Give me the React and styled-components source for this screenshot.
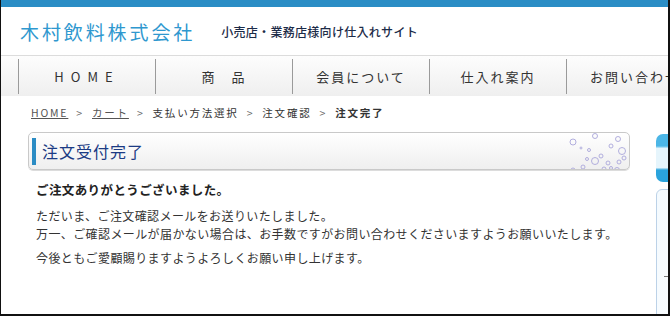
import React from 'react'
import styled, { createGlobalStyle } from 'styled-components'

const GlobalStyle = createGlobalStyle`
  body {
    margin: 0;
    background: #fff;
    font-family: "Noto Sans CJK JP", "Noto Sans", sans-serif;
  }
`

const Frame = styled.div`
  width: 670px;
  height: 316px;
  box-sizing: border-box;
  border-left: 1px solid #111;
  border-right: 2px solid #111;
  border-bottom: 2px solid #111;
  overflow: hidden;
`
const Page = styled.div`width: 1000px;`
const TopBar = styled.div`
  height: 7px;
  background: #2a8dc5;
`
const Header = styled.div`
  display: flex;
  align-items: center;
  height: 48px;
  padding-left: 19px;
`
const Logo = styled.div`
  font-size: 19px;
  letter-spacing: 2.9px;
  color: #2f98cf;
`
const Tagline = styled.div`
  margin-left: 26px;
  font-size: 12px;
  font-weight: 500;
  letter-spacing: 0.3px;
  color: #1c2b48;
`
const Nav = styled.nav`
  display: flex;
  height: 40px;
  padding-left: 17px;
  border-top: 1px solid #dcdcdc;
  background: linear-gradient(#fdfdfd, #efefef);
`
const NavItem = styled.div`
  flex: 0 0 137px;
  box-sizing: border-box;
  display: flex;
  align-items: center;
  justify-content: center;
  margin: 3px 0 2px;
  border-left: 1px solid #9a9a9a;
  font-size: 13px;
  color: #333;
  letter-spacing: ${p => p.spacing || 2}px;
  white-space: nowrap;
`
const Crumbs = styled.div`
  display: flex;
  align-items: center;
  gap: 8px;
  height: 32px;
  padding: 0 0 4px 30px;
  font-size: 10.5px;
  letter-spacing: 1.8px;
  color: #333;
`
const CrumbLink = styled.span`
  color: #555;
  text-decoration: underline;
`
const Sep = styled.span`color: #666;`
const Current = styled.span`font-weight: 700;`
const Columns = styled.div`
  display: flex;
  align-items: flex-start;
`
const Main = styled.div`
  width: 602px;
  margin-left: 27px;
`
const HeadingBox = styled.div`
  position: relative;
  display: flex;
  align-items: center;
  height: 36px;
  border: 1px solid #c9c9c9;
  border-radius: 5px;
  background: linear-gradient(#ffffff, #efefef);
  box-shadow: 0 1px 0 #dcdcdc;
  overflow: hidden;
`
const Accent = styled.div`
  width: 4px;
  height: 27px;
  margin-left: 3px;
  background: #2b8cc4;
`
const Title = styled.h1`
  margin: 0 0 0 6px;
  font-size: 16px;
  font-weight: 400;
  letter-spacing: 1px;
  color: #1c3b84;
`
const Bubbles = styled.svg`
  position: absolute;
  right: 0;
  top: 0;
`
const Body = styled.div`
  padding: 10px 0 0 8px;
  color: #333;
  font-size: 12px;
  letter-spacing: 0.4px;
`
const Thanks = styled.p`
  margin: 0 0 8px;
  font-size: 12.5px;
  font-weight: 700;
  color: #222;
`
const Para = styled.p`
  margin: 0 0 6px;
  line-height: 18px;
`
const Side = styled.div`
  margin-left: 26px;
  padding-top: 2px;
  width: 200px;
`
const BlueTab = styled.div`
  height: 48px;
  border-radius: 7px;
  background: linear-gradient(#4cb6e6 0%, #4cb6e6 25%, #e6f5fc 30%, #e6f5fc 70%, #2aa3dc 75%, #2aa3dc 100%);
`
const SideBox = styled.div`
  position: relative;
  height: 140px;
  margin-top: 7px;
  border: 1px solid #bcd2e8;
  border-radius: 6px;
  background: linear-gradient(100deg, #f4fafe, #fff 40%);
`
const Dash = styled.div`
  position: absolute;
  left: 7px;
  top: 86px;
  width: 8px;
  height: 1px;
  background: #777;
`

const bubbles = [
  [8, 9, 3], [30, 3, 2.5], [46, 13, 2], [53, 6, 2.5], [57, 18, 3.5], [24, 17, 1.5],
  [36, 23, 2], [30, 28, 3.5], [43, 30, 2], [54, 29, 2], [18, 34, 2], [22, 26, 1.5],
  [39, 36, 2], [46, 35, 1.5], [52, 37, 2.5], [8, 37, 2], [59, 25, 2], [16, 15, 1]
]

const App = () => (
  <Frame>
    <GlobalStyle />
    <Page>
      <TopBar />
      <Header>
        <Logo>木村飲料株式会社</Logo>
        <Tagline>小売店・業務店様向け仕入れサイト</Tagline>
      </Header>
      <Nav>
        <NavItem spacing={7}>HOME</NavItem>
        <NavItem>商　品</NavItem>
        <NavItem>会員について</NavItem>
        <NavItem>仕入れ案内</NavItem>
        <NavItem>お問い合わせ</NavItem>
      </Nav>
      <Crumbs>
        <CrumbLink>HOME</CrumbLink>
        <Sep>&gt;</Sep>
        <CrumbLink>カート</CrumbLink>
        <Sep>&gt;</Sep>
        <span>支払い方法選択</span>
        <Sep>&gt;</Sep>
        <span>注文確認</span>
        <Sep>&gt;</Sep>
        <Current>注文完了</Current>
      </Crumbs>
      <Columns>
        <Main>
          <HeadingBox>
            <Accent />
            <Title>注文受付完了</Title>
            <Bubbles width="64" height="36" viewBox="0 0 64 36">
              {bubbles.map(([cx, cy, r], i) => (
                <circle key={i} cx={cx} cy={cy} r={r} fill="none" stroke="#a9a6da" strokeWidth="0.9" />
              ))}
            </Bubbles>
          </HeadingBox>
          <Body>
            <Thanks>ご注文ありがとうございました。</Thanks>
            <Para>
              ただいま、ご注文確認メールをお送りいたしました。<br />
              万一、ご確認メールが届かない場合は、お手数ですがお問い合わせくださいますようお願いいたします。
            </Para>
            <Para>今後ともご愛顧賜りますようよろしくお願い申し上げます。</Para>
          </Body>
        </Main>
        <Side>
          <BlueTab />
          <SideBox>
            <Dash />
          </SideBox>
        </Side>
      </Columns>
    </Page>
  </Frame>
)

export default App
